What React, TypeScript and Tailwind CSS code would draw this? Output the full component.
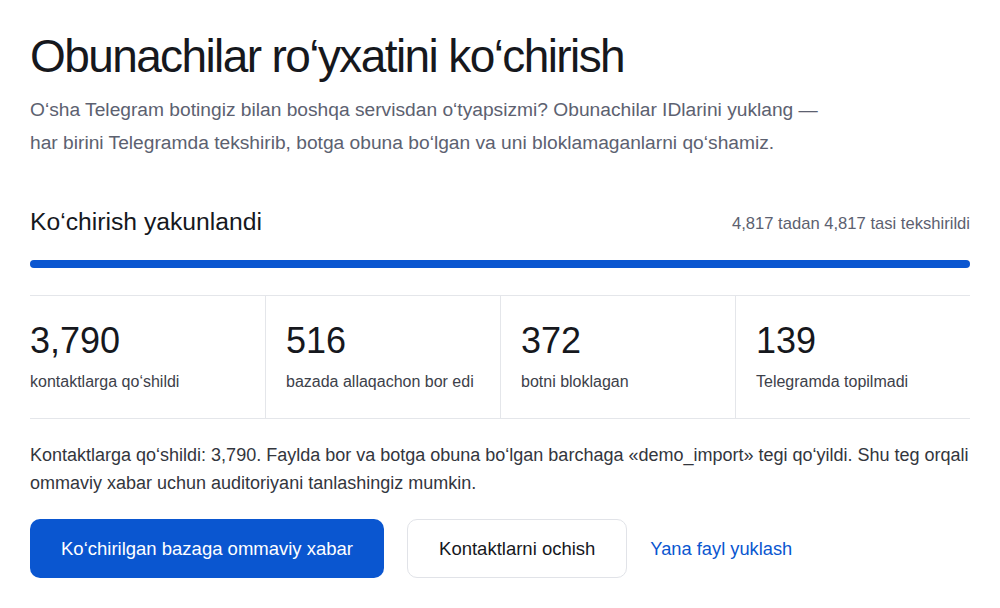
import React from 'react';

const stats = [
  { value: '3,790', label: 'kontaktlarga qo‘shildi' },
  { value: '516', label: 'bazada allaqachon bor edi' },
  { value: '372', label: 'botni bloklagan' },
  { value: '139', label: 'Telegramda topilmadi' },
];

const App: React.FC = () => {
  return (
    <div className="min-h-screen w-full bg-white font-['Liberation_Sans',Arial,sans-serif] text-[#1a1c20]">
      <div className="px-[30px] pt-[28px]">
        <h1 className="text-[46px] leading-[56px] tracking-[-1.6px] text-[#16181d]">
          Obunachilar ro‘yxatini ko‘chirish
        </h1>
        <p className="mt-[9px] max-w-[795px] text-[19.2px] leading-[33px] text-[#5c6170]">
          O‘sha Telegram botingiz bilan boshqa servisdan o‘tyapsizmi? Obunachilar IDlarini yuklang — har birini Telegramda tekshirib, botga obuna bo‘lgan va uni bloklamaganlarni qo‘shamiz.
        </p>

        <div className="mt-[47px] flex items-end justify-between">
          <h2 className="text-[24.7px] leading-[32px] text-[#16181d]">Ko‘chirish yakunlandi</h2>
          <span className="pb-[1px] text-[16.6px] text-[#5c6170]">4,817 tadan 4,817 tasi tekshirildi</span>
        </div>

        <div className="mt-[22px] h-[8px] w-full rounded-full bg-[#e6e8ec]">
          <div className="h-full w-full rounded-full bg-[#0a56d0]" />
        </div>

        <div className="mt-[27px] grid grid-cols-4 border-y border-[#e4e6ea]">
          {stats.map((s, i) => (
            <div
              key={s.label}
              className={`flex h-[122px] flex-col pt-[23px] ${i === 0 ? 'pl-0' : 'pl-[20px] border-l border-[#e4e6ea]'}`}
            >
              <div className="text-[36px] leading-[44px] text-[#16181d]">{s.value}</div>
              <div className="mt-[7px] text-[16px] leading-[24px] text-[#3d414a]">{s.label}</div>
            </div>
          ))}
        </div>

        <p className="mt-[22px] text-[18px] leading-[28px] text-[#33363d]">
          Kontaktlarga qo‘shildi: 3,790. Faylda bor va botga obuna bo‘lgan barchaga «demo_import» tegi qo‘yildi. Shu teg orqali ommaviy xabar uchun auditoriyani tanlashingiz mumkin.
        </p>

        <div className="mt-[22px] flex items-center gap-[23px]">
          <button className="h-[59px] rounded-[10px] bg-[#0a56d0] px-[31px] text-[18.5px] text-white">
            Ko‘chirilgan bazaga ommaviy xabar
          </button>
          <button className="h-[59px] rounded-[10px] border border-[#e1e3e8] bg-white px-[31px] text-[18.5px] text-[#16181d]">
            Kontaktlarni ochish
          </button>
          <a className="text-[18.3px] text-[#0a56d0]">Yana fayl yuklash</a>
        </div>
      </div>
    </div>
  );
};

export default App;
